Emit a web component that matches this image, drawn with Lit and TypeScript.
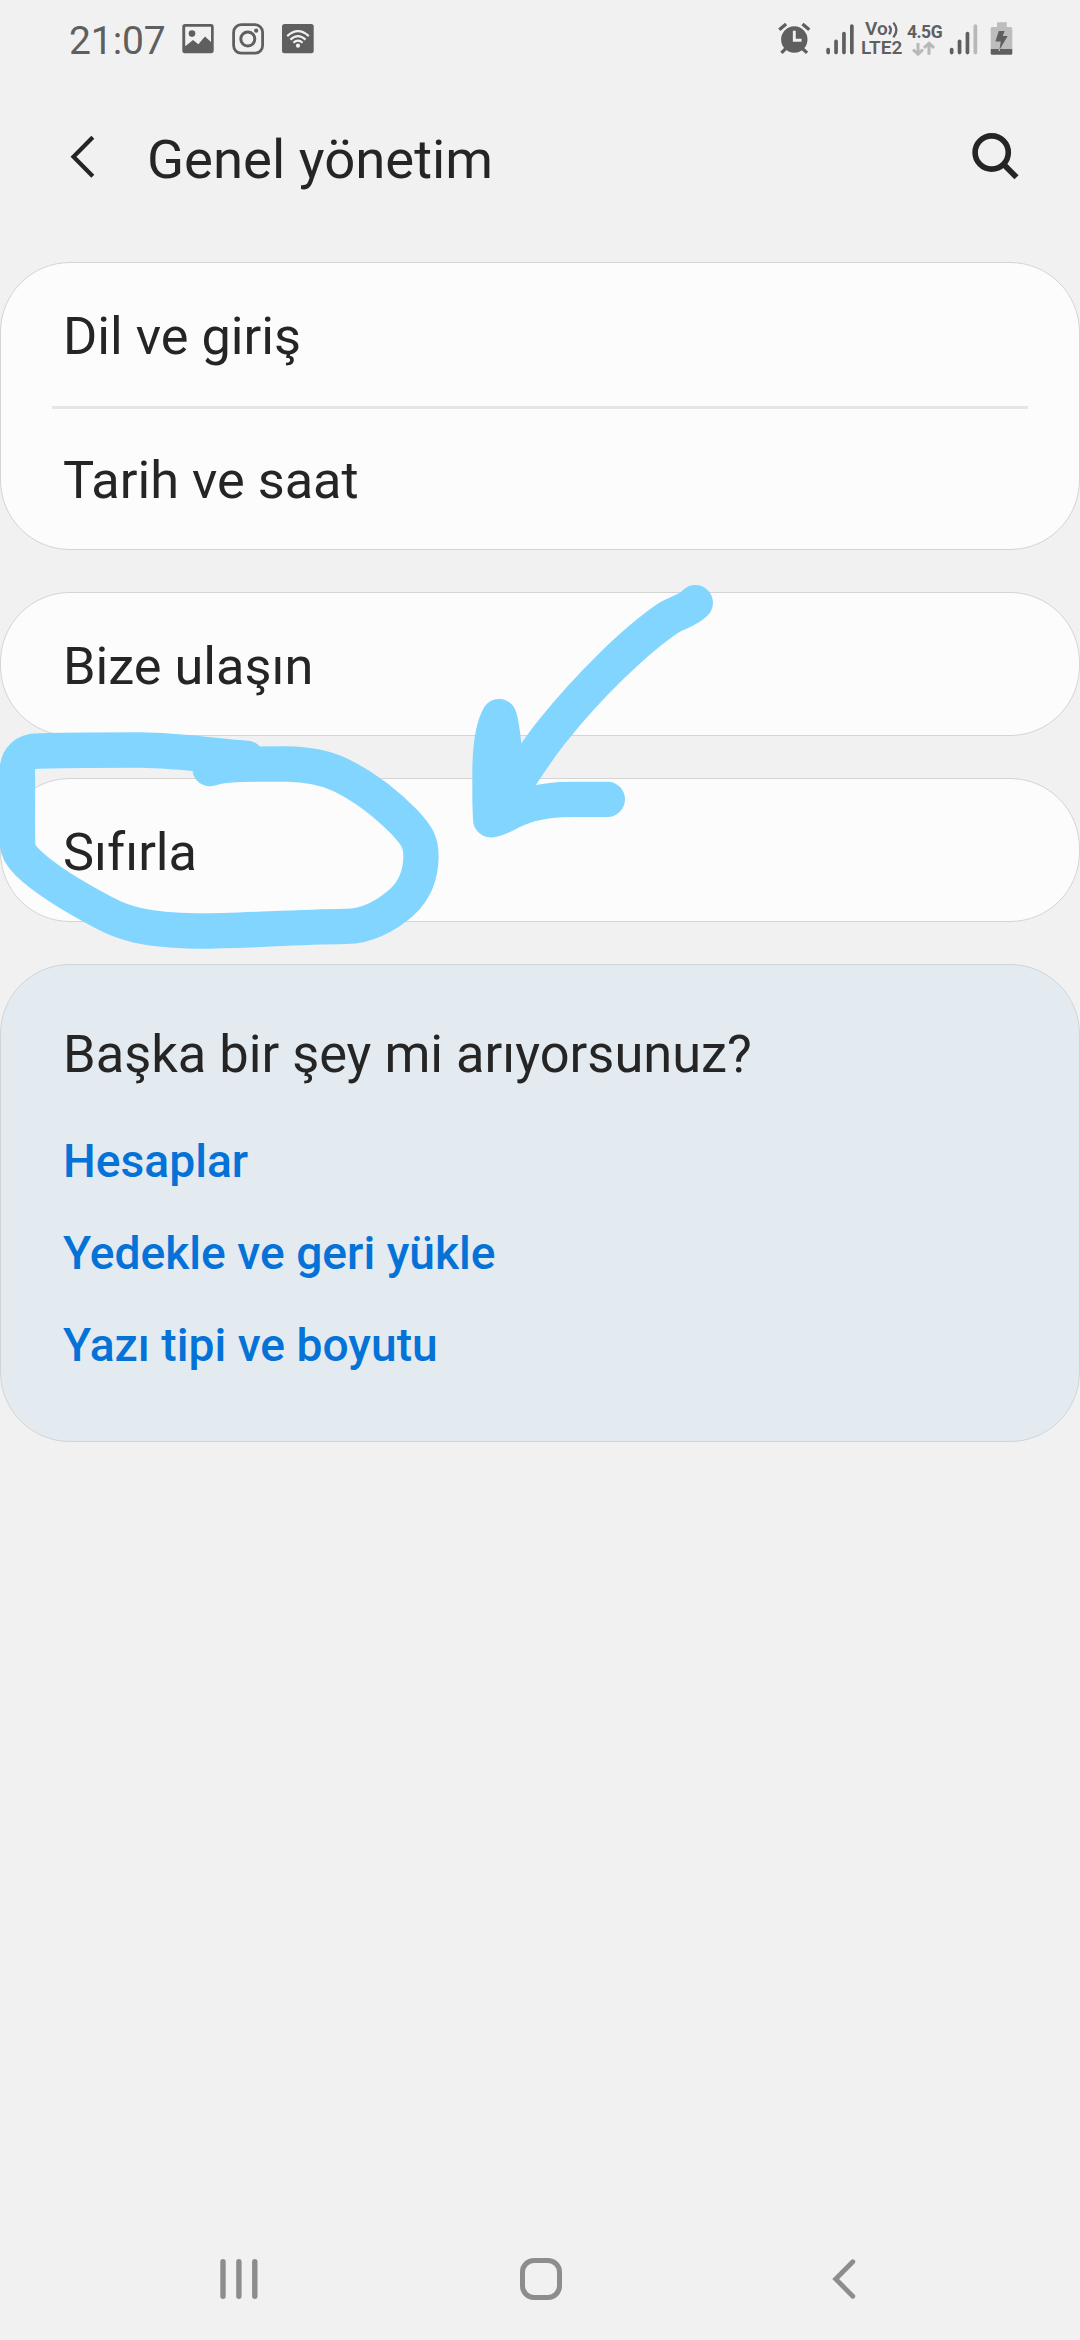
import { LitElement, html, css, svg } from "lit";
import { customElement, property } from "lit/decorators.js";

@customElement("status-bar")
class StatusBar extends LitElement {
  static styles = css`
    :host {
      display: flex;
      height: 80px;
      padding: 0 67px 0 69px;
      box-sizing: border-box;
      justify-content: space-between;
      color: #5f5f5f;
      font-family: Roboto, "Liberation Sans", sans-serif;
    }
    .side {
      display: flex;
      align-items: flex-start;
    }
    svg {
      display: block;
      overflow: visible;
    }
    .time {
      font-size: 39px;
      line-height: 46px;
      font-weight: 400;
      padding-top: 18px;
      width: 113px;
      letter-spacing: -0.1px;
      white-space: nowrap;
    }
    .volte {
      display: flex;
      flex-direction: column;
      width: 46px;
      padding-top: 20px;
      font-size: 18px;
      line-height: 18px;
      font-weight: 600;
      white-space: nowrap;
    }
    .vo {
      display: flex;
      padding-left: 4px;
      font-size: 19px;
    }
    .vo svg {
      margin-top: 1.5px;
    }
    .lte {
      font-size: 19px;
      padding-top: 1px;
    }
    .data {
      width: 43px;
      padding-top: 22px;
      font-size: 17.5px;
      line-height: 20px;
      font-weight: 700;
      letter-spacing: -0.5px;
      white-space: nowrap;
    }
  `;

  private bars(x: number, dimLast: boolean) {
    return [47.7, 39.5, 31.7, 24.3].map(
      (top, i) => svg`<rect x=${x + i * 7.9} y=${top} width="3.7" height=${54.4 - top}
        rx="1.8" fill=${dimLast && i === 3 ? "#b8b8b8" : "#5f5f5f"}></rect>`
    );
  }

  render() {
    return html`
      <div class="side">
        <span class="time">21:07</span>
        <svg width="134" height="80" viewBox="182 0 134 80" fill="none" stroke="#5f5f5f">
          <path fill="#5f5f5f" stroke="none" fill-rule="evenodd"
            d="M185 24H211Q213.7 24 213.7 26.7V50.6Q213.7 53.3 211 53.3H185Q182.3 53.3 182.3 50.6V26.7Q182.3 24 185 24ZM185.2 26.8V46.3L193 40L198.3 44.2L205 36.5L211 42V26.8Z"></path>
          <circle cx="192" cy="33.6" r="3.3" fill="#5f5f5f" stroke="none"></circle>
          <rect x="233.6" y="24.7" width="29" height="28.4" rx="7.5" stroke-width="2.8"></rect>
          <circle cx="247.8" cy="39" r="7" stroke-width="3"></circle>
          <circle cx="256.2" cy="30.7" r="2.1" fill="#5f5f5f" stroke="none"></circle>
          <rect x="282" y="24" width="31.7" height="29.3" rx="2.5" fill="#5f5f5f" stroke="none"></rect>
          <g stroke="#f1f1f1" stroke-width="2.2">
            <path d="M287.2 36.1Q298 26.2 308.8 36.1"></path>
            <path d="M290.4 39.6Q298 32.7 305.6 39.6"></path>
            <path d="M293.4 42.7Q298 38.6 302.6 42.7"></path>
          </g>
          <circle cx="298" cy="45.7" r="2.1" fill="#f1f1f1" stroke="none"></circle>
        </svg>
      </div>
      <div class="side">
        <svg width="84" height="80" viewBox="776.5 0 84 80">
          <g stroke="#5f5f5f" stroke-width="3.3" fill="none">
            <path d="M778.8 29.8L785.6 24M802 24L808.8 29.8M780.9 52.9L786 47.8M806.6 52.9L801 47.8"></path>
          </g>
          <circle cx="793.8" cy="39.5" r="13.2" fill="#5f5f5f"></circle>
          <path d="M793.8 30.8V40.3H801" fill="none" stroke="#f1f1f1" stroke-width="2.9"></path>
          ${this.bars(825.8, false)}
        </svg>
        <div class="volte">
          <span class="vo">Vo<svg width="10" height="16" viewBox="0 0 10 16" fill="none" stroke="#5f5f5f" stroke-width="2.3">
            <path d="M1 3.7Q4.6 8 1 12.3M5.4 0.6Q11.4 8 5.4 15.4"></path>
          </svg></span>
          <span class="lte">LTE2</span>
        </div>
        <div class="data">
          4.5G
          <svg width="28" height="14" viewBox="0 0 28 14" fill="none" stroke="#b8b8b8" stroke-width="3">
            <path d="M11 1V12M6 7.5L11 12.2L16 7.5M22 12.8V1.5M17 5.8L22 1.2L27 5.8"></path>
          </svg>
        </div>
        <svg width="63" height="80" viewBox="950 0 63 80">
          ${this.bars(949.8, true)}
          <path fill="#bdbdbd" d="M997 22.3H1006.7V27H1010.8Q1012.3 27 1012.3 28.5V49H990.7V28.5Q990.7 27 992.2 27H997Z"></path>
          <path fill="#5f5f5f" d="M990.7 49H1012.3V53.2Q1012.3 54.7 1010.8 54.7H992.2Q990.7 54.7 990.7 53.2Z"></path>
          <path fill="#5f5f5f" d="M998.8 31H1004.6L1002.8 36H1007.7L999.4 50L1000.8 41.5H995.4Z"></path>
          <circle cx="999.3" cy="50" r="0.8" fill="#f1f1f1"></circle>
        </svg>
      </div>
    `;
  }
}

@customElement("settings-card")
class SettingsCard extends LitElement {
  @property({ attribute: false }) items: string[] = [];

  static styles = css`
    :host {
      display: flex;
      flex-direction: column;
      box-sizing: border-box;
      border: 1px solid #d4d4d4;
      border-radius: 70px;
      background: #fcfcfc;
    }
    .row {
      height: 142px;
      display: flex;
      align-items: center;
      padding: 0 63px 0 62px;
      color: #252525;
      font-family: Roboto, "Liberation Sans", sans-serif;
      font-size: 52.3px;
      line-height: 60px;
      white-space: nowrap;
    }
    .text {
      padding-top: 4px;
    }
    .divider {
      height: 3px;
      margin: 1px 51px -2px;
      background: #e5e5e5;
    }
  `;

  render() {
    return this.items.map(
      (item, i) => html`
        ${i ? html`<div class="divider"></div>` : ""}
        <div class="row"><span class="text">${item}</span></div>
      `
    );
  }
}

@customElement("app-root")
class AppRoot extends LitElement {
  static styles = css`
    :host {
      display: flex;
      flex-direction: column;
      position: relative;
      width: 1080px;
      height: 2340px;
      overflow: hidden;
      background: #f1f1f1;
      color: #252525;
      font-family: Roboto, "Liberation Sans", sans-serif;
    }
    svg {
      display: block;
      overflow: visible;
    }
    .header {
      display: flex;
      height: 182px;
      padding: 0 60px 0 70px;
      align-items: flex-start;
    }
    .title {
      flex: 1;
      margin: 0;
      padding: 47px 0 0 53px;
      font-size: 54.5px;
      line-height: 64px;
      font-weight: 400;
      white-space: nowrap;
    }
    .back {
      padding-top: 55px;
    }
    .search {
      padding-top: 50px;
    }
    .cards {
      flex: 1;
      display: flex;
      flex-direction: column;
      gap: 42px;
    }
    .single {
      height: 144px;
    }
    .double {
      height: 288px;
    }
    .suggest {
      height: 478px;
      box-sizing: border-box;
      border: 1px solid #d0d5d8;
      border-radius: 70px;
      background: #e3eaf0;
      padding: 59px 62px 0 62px;
      display: flex;
      flex-direction: column;
    }
    .question {
      font-size: 52.4px;
      line-height: 60px;
      white-space: nowrap;
    }
    .links {
      display: flex;
      flex-direction: column;
      padding-top: 31px;
    }
    .link {
      color: #0472d6;
      font-size: 46.2px;
      line-height: 92px;
      font-weight: 500;
      white-space: nowrap;
    }
    .nav {
      display: flex;
      height: 122px;
      padding-left: 219px;
      align-items: center;
    }
    .home {
      margin: 0 270px 0 261px;
    }
    .marks {
      position: absolute;
      left: 0;
      top: 0;
      pointer-events: none;
    }
  `;

  render() {
    return html`
      <status-bar></status-bar>
      <header class="header">
        <svg class="back" width="24" height="44" viewBox="0 0 24 44" fill="none" stroke="#252525" stroke-width="4.2">
          <path d="M22.8 2.2L3.5 21.7L22.8 41.2"></path>
        </svg>
        <h1 class="title">Genel yönetim</h1>
        <svg class="search" width="48" height="50" viewBox="0 0 48 50" fill="none" stroke="#252525">
          <circle cx="19.7" cy="22.5" r="16.6" stroke-width="5.6"></circle>
          <path d="M31.5 34.3L44.5 47.3" stroke-width="5.8"></path>
        </svg>
      </header>
      <main class="cards">
        <settings-card class="double" .items=${["Dil ve giriş", "Tarih ve saat"]}></settings-card>
        <settings-card class="single" .items=${["Bize ulaşın"]}></settings-card>
        <settings-card class="single" .items=${["Sıfırla"]}></settings-card>
        <section class="suggest">
          <div class="question">Başka bir şey mi arıyorsunuz?</div>
          <div class="links">
            ${["Hesaplar", "Yedekle ve geri yükle", "Yazı tipi ve boyutu"].map(
              (label) => html`<a class="link">${label}</a>`
            )}
          </div>
        </section>
      </main>
      <nav class="nav">
        <svg width="40" height="42" viewBox="0 0 40 42" fill="none" stroke="#8d8d8d" stroke-width="5.4" stroke-linecap="round">
          <path d="M4 3.7V38.3M19.9 3.7V38.3M35.8 3.7V38.3"></path>
        </svg>
        <svg class="home" width="42" height="42" viewBox="0 0 42 42" fill="none" stroke="#8d8d8d" stroke-width="5">
          <rect x="2.5" y="2.5" width="37" height="37" rx="11.5"></rect>
        </svg>
        <svg width="25" height="42" viewBox="0 0 25 42" fill="none" stroke="#8d8d8d" stroke-width="4.8" stroke-linecap="round">
          <path d="M20.8 3.7L3.7 21L20.8 38.3"></path>
        </svg>
      </nav>
      <svg class="marks" width="1080" height="1000" viewBox="0 0 1080 1000" fill="none"
        stroke="#82d5ff" stroke-linecap="round" stroke-linejoin="round">
        <g transform="translate(0 580) scale(0.33333)" stroke-width="106">
          <path d="M630 566C670 552 710 552 860 552C930 553 975 563 1020 584C1100 622 1165 677 1215 728C1250 766 1263 785 1263 830C1262 890 1240 935 1205 967C1160 1006 1100 1039 1040 1039C850 1042 740 1053 590 1053C430 1050 365 1027 315 1000C210 945 130 893 85 850C63 828 54 812 53 795C50 720 54 660 52 570C53 535 75 513 115 513C250 510 330 510 420 510C530 511 640 527 740 535"></path>
        </g>
        <g transform="translate(440 560) scale(0.33333)" stroke-width="106">
          <path d="M766 128C740 154 715 155 685 174C580 245 440 385 340 510C280 582 230 670 155 779"></path>
          <path d="M177 470C155 510 150 580 150 640V725L152 779C205 775 225 718 400 718H502M177 470C188 500 190 545 195 600L170 740"></path>
        </g>
      </svg>
    `;
  }
}
